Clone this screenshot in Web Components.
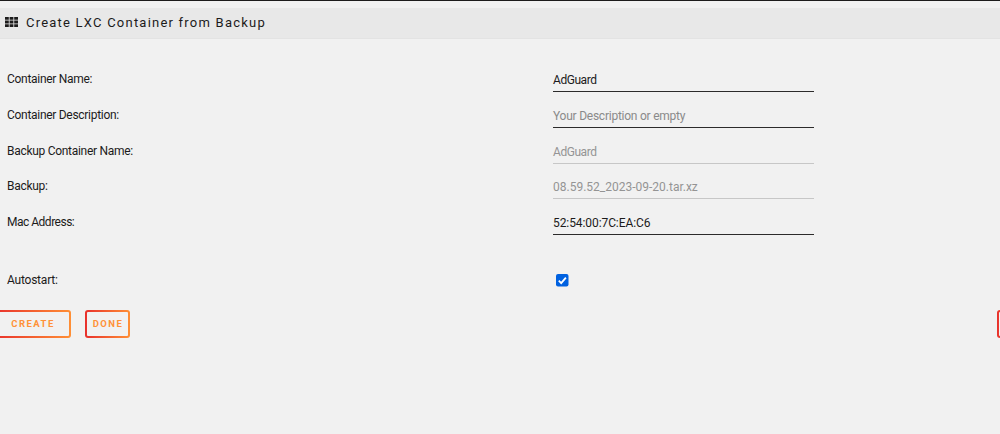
<!DOCTYPE html>
<html lang="en">
<head>
<meta charset="utf-8">
<title>Create LXC Container from Backup</title>
<style>
    body {
        margin: 0;
        height: 434px;
        overflow: hidden;
        background: #f1f1f1;
        color: #1c1b1b;
        font: 12px/16px Roboto, "Noto Sans", sans-serif;
    }
</style>
</head>
<body>
<backup-page>
    <page-title slot="title">Create LXC Container from Backup</page-title>
    <form-row label="Container Name:" value="AdGuard" style="--spacing: -0.45px"></form-row>
    <form-row label="Container Description:" placeholder="Your Description or empty" style="--spacing: -0.24px"></form-row>
    <form-row label="Backup Container Name:" value="AdGuard" disabled style="--spacing: -0.45px"></form-row>
    <form-row label="Backup:" value="08.59.52_2023-09-20.tar.xz" disabled style="--spacing: 0"></form-row>
    <form-row label="Mac Address:" value="52:54:00:7C:EA:C6" style="--spacing: -0.08px; --label-spacing: -0.5px"></form-row>
    <check-row slot="toggle">Autostart:</check-row>
    <gradient-button slot="actions" class="create">CREATE</gradient-button>
    <gradient-button slot="actions" class="done">DONE</gradient-button>
    <gradient-button slot="edge"></gradient-button>
</backup-page>
<script>
class BackupPage extends HTMLElement {
    connectedCallback() {
        this.attachShadow({ mode: 'open' });
        this.shadowRoot.innerHTML = `
            <style>
                :host {
                    display: block;
                    height: 433px;
                    border-top: 1px solid #1c1b1b;
                    overflow: hidden;
                }
                .fields {
                    padding-top: 28px;
                }
                .toggle {
                    padding-top: 26px;
                }
                .actions {
                    display: flex;
                    margin-top: 22px;
                    width: 1017px;
                }
                .actions ::slotted(.create) {
                    width: 77px;
                    margin-left: -6px;
                }
                .actions ::slotted(.done) {
                    width: 45px;
                    margin-left: 14px;
                }
                .edge {
                    width: 20px;
                    margin-left: auto;
                }
            </style>
            <slot name="title"></slot>
            <div class="fields"><slot></slot></div>
            <div class="toggle"><slot name="toggle"></slot></div>
            <div class="actions">
                <slot name="actions"></slot>
                <div class="edge"><slot name="edge"></slot></div>
            </div>
        `;
    }
}

class PageTitle extends HTMLElement {
    connectedCallback() {
        this.attachShadow({ mode: 'open' });
        this.shadowRoot.innerHTML = `
            <style>
                :host {
                    display: flex;
                    align-items: center;
                    box-sizing: border-box;
                    height: 31px;
                    margin-top: 7px;
                    padding-left: 5px;
                    gap: 8px;
                    background: #e8e8e8;
                    border-bottom: 1px solid #e3e3e3;
                    font-size: 13px;
                    letter-spacing: 1.22px;
                    white-space: nowrap;
                }
                svg {
                    display: block;
                    flex: none;
                    margin-top: -2px;
                }
                span {
                    margin-top: -1px;
                }
            </style>
            <svg width="13" height="10" viewBox="0 0 13 10" fill="#1c1b1b">
                <path d="M0 0h3.8v2.8H0zM4.6 0h3.8v2.8H4.6zM9.2 0H13v2.8H9.2zM0 3.6h3.8v2.8H0zM4.6 3.6h3.8v2.8H4.6zM9.2 3.6H13v2.8H9.2zM0 7.2h3.8V10H0zM4.6 7.2h3.8V10H4.6zM9.2 7.2H13V10H9.2z"/>
            </svg>
            <span><slot></slot></span>
        `;
    }
}

class FormRow extends HTMLElement {
    connectedCallback() {
        const value = this.getAttribute('value');
        this.attachShadow({ mode: 'open' });
        this.shadowRoot.innerHTML = `
            <style>
                :host {
                    display: flex;
                    height: 35.75px;
                    padding-left: 7px;
                }
                .label {
                    width: 546px;
                    padding-top: 4px;
                    letter-spacing: var(--label-spacing, -0.29px);
                }
                .field {
                    box-sizing: border-box;
                    width: 261px;
                    height: 25px;
                    padding-top: 5px;
                    border-bottom: 1px solid #2c2b2b;
                    letter-spacing: var(--spacing, 0);
                }
                .placeholder {
                    color: #8a8a8a;
                }
                :host([disabled]) .field {
                    color: #949494;
                    border-color: #c7c7c7;
                }
            </style>
            <div class="label">${this.getAttribute('label')}</div>
            <div class="field ${value ? '' : 'placeholder'}">${value || this.getAttribute('placeholder')}</div>
        `;
    }
}

class CheckRow extends HTMLElement {
    connectedCallback() {
        this.attachShadow({ mode: 'open' });
        this.shadowRoot.innerHTML = `
            <style>
                :host {
                    display: flex;
                    align-items: center;
                    height: 16px;
                    padding-left: 7px;
                }
                .label {
                    width: 549px;
                    letter-spacing: -0.22px;
                }
                svg {
                    display: block;
                    margin-top: 2px;
                }
            </style>
            <div class="label"><slot></slot></div>
            <svg width="13" height="13" viewBox="0 0 13 13">
                <rect width="12.5" height="12.5" rx="2" fill="#0061e0"/>
                <path d="M2.8 6.7l2.4 2.4 4.7-5.5" fill="none" stroke="#fff" stroke-width="1.8"/>
            </svg>
        `;
    }
}

class GradientButton extends HTMLElement {
    connectedCallback() {
        this.attachShadow({ mode: 'open' });
        this.shadowRoot.innerHTML = `
            <style>
                :host {
                    display: flex;
                    align-items: center;
                    justify-content: center;
                    box-sizing: border-box;
                    height: 28px;
                    padding: 1px 0 0 1px;
                    border: 2px solid transparent;
                    border-radius: 3px;
                    background: linear-gradient(#f1f1f1, #f1f1f1) padding-box,
                        linear-gradient(90deg, #e8302c, #ff8f35) border-box;
                    color: #ff9138;
                    font-size: 9.5px;
                    font-weight: 700;
                    letter-spacing: 1.45px;
                }
            </style>
            <slot></slot>
        `;
    }
}

customElements.define('backup-page', BackupPage);
customElements.define('page-title', PageTitle);
customElements.define('form-row', FormRow);
customElements.define('check-row', CheckRow);
customElements.define('gradient-button', GradientButton);
</script>
</body>
</html>
